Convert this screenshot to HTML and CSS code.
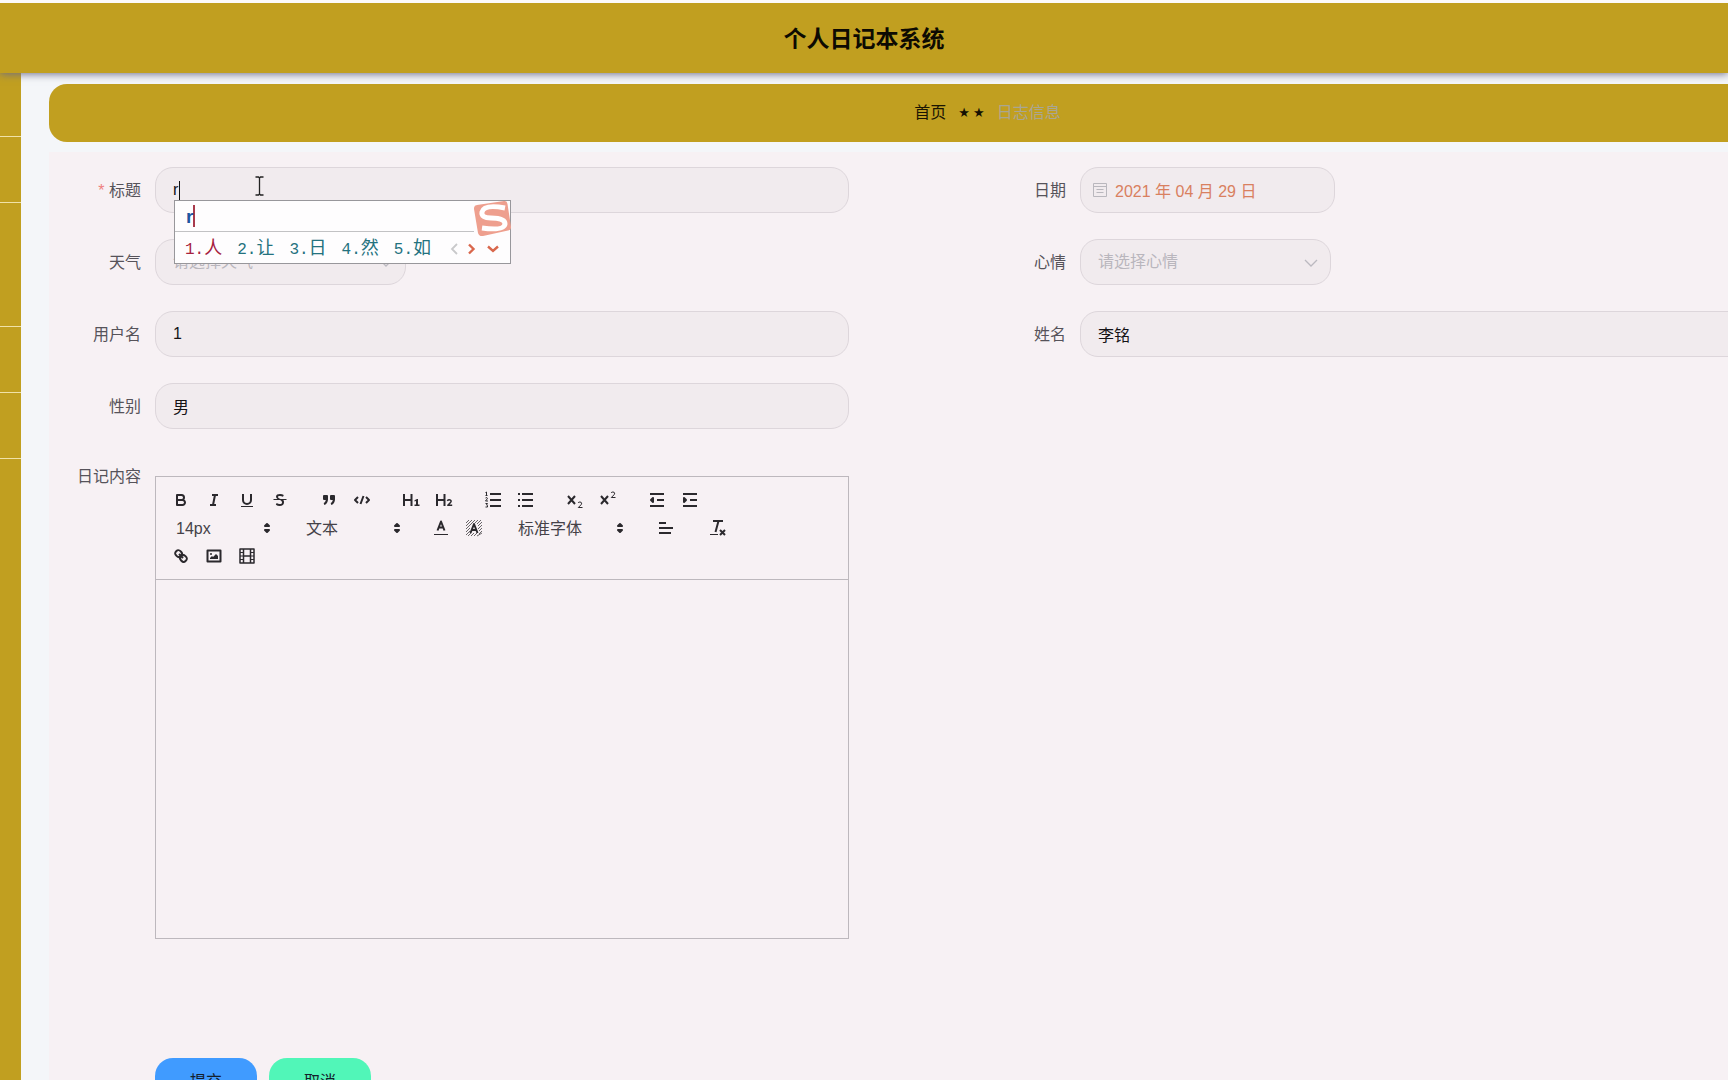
FILE: index.html
```html
<!DOCTYPE html>
<html lang="zh-CN">
<head>
<meta charset="utf-8">
<title>个人日记本系统</title>
<link rel="stylesheet" href="styles.css">
</head>
<body>
<div class="app">
  <header class="topbar"><h1>个人日记本系统</h1></header>
  <div class="body">
    <nav class="sidebar">
      <div class="side-item"></div>
      <div class="side-item side-short"></div>
      <div class="side-item side-tall"></div>
      <div class="side-item side-short"></div>
      <div class="side-item side-short"></div>
    </nav>
    <main class="main">
      <nav class="crumbs">
        <a href="#">首页</a>
        <span class="stars"><span>★</span><span>★</span></span>
        <span class="current">日志信息</span>
      </nav>
      <form class="panel">
        <div class="grid">
          <div class="item">
            <label for="title"><span class="req">*</span> 标题</label>
            <div class="field">
              <input id="title" class="control" type="text" value="r">
              <span class="caret"></span>
              <svg class="ibeam" viewBox="0 0 9 20" width="9" height="20" fill="none" stroke="#222" stroke-width="1.3"><path d="M.5 1H3.5L4.5 2L5.500 1H8.500M4.500 2V18M.5 19H3.500L4.500 18L5.500 19H8.500"/></svg>
              <div class="ime">
                <div class="ime-top"><span class="typed">r</span></div>
                <div class="ime-list">
                  <span class="cand first"><b>1.</b>人</span>
                  <span class="cand"><b>2.</b>让</span>
                  <span class="cand"><b>3.</b>日</span>
                  <span class="cand"><b>4.</b>然</span>
                  <span class="cand"><b>5.</b>如</span>
                  <svg class="ime-nav" viewBox="0 0 50 12" width="50" height="12" fill="none" stroke-width="2.400"><path stroke="#c9c9cb" stroke-width="1.800" d="M8 1L3 6l5 5"/><path stroke="#d9674c" d="M20 1.500L24.500 6 20 10.500M39 3.500l5 4.500 5-4.500"/></svg>
                </div>
                <svg class="ime-logo" viewBox="0 0 37 36" width="37" height="36"><path fill="#ee9f8e" d="M3 4 30 0q3-.3 3.500 3L37 26q.3 3-3 3.600L9 35q-4 .6-5-3L0 8q-.4-3.500 3-4Z"/><path fill="none" stroke="#fff" stroke-width="5" d="M31 7Q10 3 8 11q-1 6 9 6 14 0 14 6-1 7-23 4"/></svg>
              </div>
            </div>
          </div>
          <div class="item">
            <label for="date">日期</label>
            <div class="field date">
              <input id="date" class="control" type="text" value="2021 年 04 月 29 日">
              <svg class="cal" viewBox="0 0 16 16" width="16" height="16" fill="none" stroke="#b9b7bd"><path d="M1.500 1.500h13v13h-13zM1.500 4.500h13M4.500 7.500h7M4.500 10.500h7"/></svg>
            </div>
          </div>
          <div class="item">
            <label for="weather">天气</label>
            <div class="field pick">
              <select id="weather" class="control"><option>请选择天气</option></select>
              <svg class="chev" viewBox="0 0 14 8" width="14" height="8" fill="none" stroke="#bbb9c0" stroke-width="1.300"><path d="M1 1l6 6 6-6"/></svg>
            </div>
          </div>
          <div class="item">
            <label for="mood">心情</label>
            <div class="field pick">
              <select id="mood" class="control"><option>请选择心情</option></select>
              <svg class="chev" viewBox="0 0 14 8" width="14" height="8" fill="none" stroke="#bbb9c0" stroke-width="1.300"><path d="M1 1l6 6 6-6"/></svg>
            </div>
          </div>
          <div class="item">
            <label for="user">用户名</label>
            <div class="field"><input id="user" class="control" type="text" value="1"></div>
          </div>
          <div class="item">
            <label for="name">姓名</label>
            <div class="field wide"><input id="name" class="control" type="text" value="李铭"></div>
          </div>
          <div class="item">
            <label for="sex">性别</label>
            <div class="field"><input id="sex" class="control" type="text" value="男"></div>
          </div>
        </div>
        <div class="grid">
          <div class="item top">
            <label for="content">日记内容</label>
            <div class="field editor">
              <div class="toolbar">
                <div class="row">
                  <div class="group">
                    <button type="button" aria-label="加粗"><svg viewBox="0 0 18 18"><path d="M5 4H9.500A2.500 2.500 0 0 1 12 6.500A2.500 2.500 0 0 1 9.500 9H5ZM5 9H10.500A2.500 2.500 0 0 1 13 11.500A2.500 2.500 0 0 1 10.500 14H5Z"/></svg></button>
                    <button type="button" aria-label="斜体"><svg viewBox="0 0 18 18"><path d="M7 4H13M5 14H11M8 14L10 4"/></svg></button>
                    <button type="button" aria-label="下划线"><svg viewBox="0 0 18 18"><path d="M5 3V9A4 4 0 0 0 13 9V3"/><rect class="f" height="1" width="12" x="3" y="15"/></svg></button>
                    <button type="button" aria-label="删除线"><svg viewBox="0 0 18 18"><path class="thin" d="M2.500 8.500H15.500"/><path class="f" d="M6.500 8A3 3 0 0 1 5 5.600C5 3.700 6.600 3 9 3a7 7 0 0 1 3.800 1l-.8 1.800A6 6 0 0 0 9 5C7.500 5 7 5.300 7 6c0 .8.800 1.200 2.500 2ZM10 9h2.300A3 3 0 0 1 13 11.400C13 13.500 11.300 15 8.800 15A7 7 0 0 1 4.800 13.800l.9-1.800A5 5 0 0 0 8.800 13c1.400 0 2.200-.5 2.200-1.500C11 10.500 10.500 9.700 9 9Z"/></svg></button>
                  </div>
                  <div class="group">
                    <button type="button" aria-label="引用"><svg viewBox="0 0 18 18"><g class="s"><rect height="3" width="3" x="4" y="5"/><rect height="3" width="3" x="11" y="5"/><path d="M7 8c0 4.031-3 5-3 5M14 8c0 4.031-3 5-3 5"/></g></svg></button>
                    <button type="button" aria-label="代码"><svg viewBox="0 0 18 18"><path d="M5 6L2 9 5 12M13 6L16 9 13 12M10.500 5L7.500 13"/></svg></button>
                  </div>
                  <div class="group">
                    <button type="button" aria-label="标题1"><svg viewBox="0 0 18 18"><path d="M2 3V15M9.500 3V15M9.500 9H2"/><path class="f" d="M12.500 9.200 15 8H16V13.500H17.500V15H12.500V13.500H14V10L12.500 10.600Z"/></svg></button>
                    <button type="button" aria-label="标题2"><svg viewBox="0 0 18 18"><path d="M2 3V15M9.500 3V15M9.500 9H2"/><path stroke-width="1.500" d="M12.300 9.800Q13 8.700 14.300 8.700C16.300 8.700 16.600 10.400 15.500 11.500L12.800 14.200H17.200"/></svg></button>
                  </div>
                  <div class="group">
                    <button type="button" aria-label="有序列表"><svg viewBox="0 0 18 18"><path d="M6 3H17M6 9H17M6 15H17"/><path class="thin" d="M1.500 1.500L2.500 1V4.500M1.500 4.500H3.500M1.500 7Q3.500 6 3.500 7.500L1.500 10H4M1.500 12.500H3.500L2.500 14Q4 14 3.500 16H1.500"/></svg></button>
                    <button type="button" aria-label="无序列表"><svg viewBox="0 0 18 18"><path d="M5 3H16M5 9H16M5 15H16"/><path d="M1 3H3M1 9H3M1 15H3"/></svg></button>
                  </div>
                  <div class="group">
                    <button type="button" aria-label="下标"><svg viewBox="0 0 18 18"><path d="M2 5L9 13M9 5L2 13"/><path class="thin" d="M12 12Q12.500 11 13.900 11C16 11 16 12.800 15 13.800L12.300 16.500H16.500"/></svg></button>
                    <button type="button" aria-label="上标"><svg viewBox="0 0 18 18"><path d="M2 5L9 13M9 5L2 13"/><path class="thin" d="M12 2Q12.500 1 13.900 1C16 1 16 2.800 15 3.800L12.300 6.500H16.500"/></svg></button>
                  </div>
                  <div class="group">
                    <button type="button" aria-label="减少缩进"><svg viewBox="0 0 18 18"><path d="M2 15H16M2 3H16M9 9H16"/><path class="s" d="M5 7V11L3 9Z"/></svg></button>
                    <button type="button" aria-label="增加缩进"><svg viewBox="0 0 18 18"><path d="M2 15H16M2 3H16M9 9H16"/><path class="s" d="M3 7V11L5 9Z"/></svg></button>
                  </div>
                </div>
                <div class="row">
                  <div class="picker"><select aria-label="字号"><option>14px</option></select><svg viewBox="0 0 18 18"><path class="s" d="M7 11L9 13 11 11ZM7 7L9 5 11 7Z"/></svg></div>
                  <div class="picker"><select aria-label="段落"><option>文本</option></select><svg viewBox="0 0 18 18"><path class="s" d="M7 11L9 13 11 11ZM7 7L9 5 11 7Z"/></svg></div>
                  <div class="group">
                    <button type="button" aria-label="文字颜色"><svg viewBox="0 0 18 18"><path class="thin" d="M2 15.500H16"/><path d="M5.500 11.500L9 2.500L12.500 11.500M11.600 8.500H6.400"/></svg></button>
                    <button type="button" aria-label="背景颜色"><svg viewBox="0 0 18 18"><path class="hatch" d="M1 4L4 1M1 7L7 1M1 10L10 1M1 13L5 9M1 16L5 12M3 17L6 14M10 4L13 1M12 5L16 1M13 7L17 3M13 10L17 6M14 12L17 9M14 15L17 12M12 17L17 14M6 17L9 14M9 17L12 14"/><path d="M5.500 14L9 5L12.500 14M11.600 11H6.400"/></svg></button>
                  </div>
                  <div class="picker font"><select aria-label="字体"><option>标准字体</option></select><svg viewBox="0 0 18 18"><path class="s" d="M7 11L9 13 11 11ZM7 7L9 5 11 7Z"/></svg></div>
                  <button type="button" class="align" aria-label="对齐"><svg viewBox="0 0 18 18"><path d="M2 9H16M2 14H14M2 4H9"/></svg></button>
                  <button type="button" aria-label="清除格式"><svg viewBox="0 0 18 18"><path d="M4 2H14M6.500 13L9.500 2M11 11L16 16M16 11L11 16"/><rect class="f" height="1" width="8" x="1" y="15"/></svg></button>
                </div>
                <div class="row">
                  <div class="group">
                    <button type="button" aria-label="链接"><svg viewBox="0 0 18 18"><path d="M7 7L11 11M8.900 4.577a3.476 3.476 0 0 1 .36 4.679A3.476 3.476 0 0 1 4.577 8.900C3.185 7.500 2.035 6.400 4.217 4.217S7.500 3.185 8.900 4.577ZM13.423 9.100a3.476 3.476 0 0 0-4.679-.36 3.476 3.476 0 0 0 .36 4.679c1.392 1.392 2.500 2.542 4.679.36S14.815 10.500 13.423 9.100Z"/></svg></button>
                    <button type="button" aria-label="图片"><svg viewBox="0 0 18 18"><rect height="11" width="13" x="2.500" y="3.500"/><circle class="f" cx="6" cy="7" r="1"/><path class="f" d="M5 12V11L7 9 8 10 11 7 13 9V12Z"/></svg></button>
                    <button type="button" aria-label="视频"><svg viewBox="0 0 18 18"><rect stroke-width="1.500" height="14" width="14" x="2" y="2"/><path stroke-width="1.500" d="M5 9H13M5.500 2V16M12.500 2V16"/><path class="thin" d="M2 5.500H5M2 9H5M2 12.500H5M13 5.500H16M13 9H16M13 12.500H16"/></svg></button>
                  </div>
                </div>
              </div>
              <textarea id="content"></textarea>
            </div>
          </div>
        </div>
        <div class="actions">
          <button type="submit" class="btn submit">提交</button>
          <button type="button" class="btn cancel">取消</button>
        </div>
      </form>
    </main>
  </div>
</div>
</body>
</html>
```
FILE: styles.css
```css
* { box-sizing: border-box; }
body {
  margin: 0;
  font: 16px/24px "Liberation Sans", "Noto Sans CJK SC", sans-serif;
  color: #56535a;
  background: #f4f6f9;
}
input, select, button, textarea { font: inherit; color: inherit; margin: 0; }

.app {
  height: 100vh;
  display: flex;
  flex-direction: column;
  overflow: hidden;
  border-top: 3px solid #fbfafa;
}
.topbar {
  flex: none;
  height: 70px;
  padding-top: 2px;
  display: flex;
  align-items: center;
  justify-content: center;
  background: #c19f20;
  box-shadow: 0 1px 8px #6c6c88;
  position: relative;
  z-index: 2;
}
.topbar h1 { margin: 0; font-size: 23px; font-weight: 700; line-height: 32px; color: #0d0a02; }
.body { flex: 1; display: flex; min-height: 0; }

.sidebar { flex: none; width: 21px; background: #c19f20; }
.side-item { height: 64px; border-bottom: 1px solid #f0e2a8; }
.side-short { height: 66px; }
.side-tall { height: 124px; }

/* the working area is wider than the window and is clipped on the right */
.main { flex: 1; min-width: 0; padding: 11px 0 0 28px; margin-right: -198px; }
.crumbs {
  height: 58px;
  display: flex;
  align-items: center;
  justify-content: center;
  gap: 12px;
  border-radius: 18px;
  background: #c19f20;
}
.crumbs a { color: #1b1503; text-decoration: none; }
.stars { display: flex; gap: 3px; color: #141002; font: 13px/16px "DejaVu Sans", sans-serif; }
.current { color: #a9a692; }

.panel { margin-top: 10px; padding: 15px 9px 40px 18px; background: #f7f1f4; }
.grid { display: grid; grid-template-columns: 1fr 1fr; row-gap: 26px; margin-bottom: 26px; }
.item { display: flex; align-items: center; }
.item > label { flex: none; width: 88px; padding: 2px 14px 0 0; text-align: right; white-space: nowrap; }
.top { align-items: flex-start; }
.top > label { line-height: 40px; display: flex; justify-content: flex-end; }
.req { color: #ee7f80; }
.field { position: relative; width: 75%; }
.wide { width: 90%; }
.date { width: 255px; }
.pick { width: 251px; }
.control {
  display: block;
  width: 100%;
  height: 46px;
  padding: 0 17px;
  border: 1px solid #ddd6db;
  border-radius: 18px;
  outline: 0;
  background: #f1ebee;
  color: #151316;
  appearance: none;
}
.date .control { padding-left: 34px; color: #d9805f; }
.pick .control { color: #b9b6bd; }
.cal { position: absolute; left: 12px; top: 15px; }
.chev { position: absolute; right: 13px; top: 20px; }

.caret { position: absolute; left: 24px; top: 14px; width: 1px; height: 19px; background: #111; }
.ibeam { position: absolute; left: 100px; top: 9px; }
.ime {
  position: absolute;
  z-index: 3;
  left: 19px;
  top: 33px;
  width: 337px;
  height: 64px;
  border: 1px solid #98979b;
  background: #fefdfe;
}
.ime-top { height: 31px; margin-right: 36px; padding: 4px 0 0 11px; border-bottom: 1px solid #c2c2c4; }
.typed { display: inline-block; height: 22px; border-right: 2px solid #a83a4c; font-size: 19px; font-weight: bold; line-height: 24px; color: #1d55a0; }
.ime-list { display: flex; align-items: center; gap: 15px; height: 31px; padding: 2px 0 0 10px; font-size: 18px; color: #24727e; }
.cand { display: flex; align-items: baseline; }
.cand b { font: 16px/24px "Liberation Mono", monospace; }
.first { color: #a6213f; }
.ime-nav { margin-left: 3px; }
.ime-logo { position: absolute; right: -1px; top: 0; }

.editor { margin-top: 21px; border: 1px solid #bdb8bd; }
.toolbar { padding: 9px 8px; border-bottom: 1px solid #bdb8bd; }
.row { display: flex; gap: 16px; height: 28px; }
.group { display: flex; }
.toolbar button {
  width: 33px;
  height: 28px;
  padding: 0;
  border: 0;
  background: none;
  display: flex;
  align-items: center;
  justify-content: center;
}
.toolbar .align { width: 38px; }
.toolbar svg { width: 18px; height: 18px; overflow: visible; fill: none; stroke: #2b292d; stroke-width: 2; stroke-linejoin: round; }
.toolbar .f { fill: #2b292d; stroke: none; }
.toolbar .s { fill: #2b292d; }
.toolbar .thin { stroke-width: 1; }
.toolbar .hatch { stroke-width: 0.7; }
.picker { position: relative; width: 114px; }
.font { width: 125px; }
.picker select { width: 100%; height: 28px; padding: 1px 0 0 12px; border: 0; background: none; appearance: none; color: #454248; }
.toolbar .picker svg { position: absolute; right: 2px; top: 5px; }
.editor textarea { display: block; width: 100%; height: 358px; padding: 14px 17px; border: 0; outline: 0; resize: none; background: none; }

.actions { display: flex; gap: 12px; margin: 119px 0 0 88px; }
.btn { width: 102px; height: 48px; border: 0; border-radius: 18px; color: #14202c; }
.submit { background: #409bff; }
.cancel { background: #51f6b8; }
```
